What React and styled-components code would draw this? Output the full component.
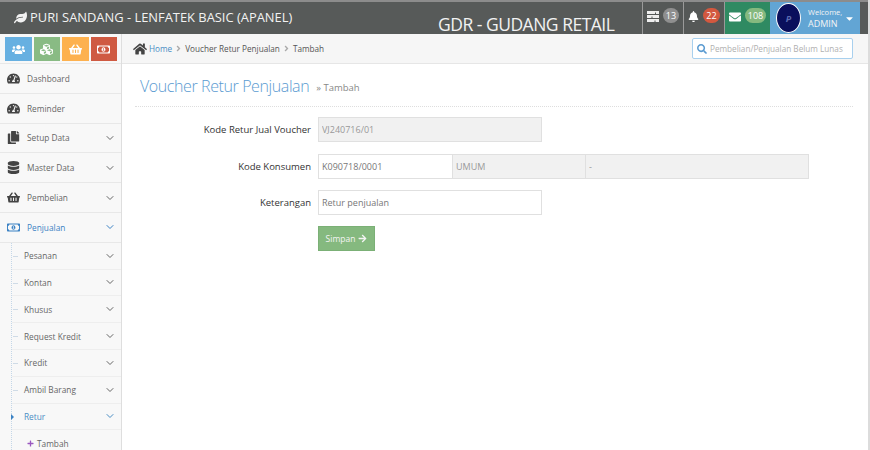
import styled, { createGlobalStyle } from "styled-components";
import {
  FaLeaf,
  FaHome,
  FaTachometerAlt,
  FaCopy,
  FaDatabase,
  FaShoppingBasket,
  FaRegMoneyBillAlt,
  FaBell,
  FaEnvelope,
  FaSearch,
  FaArrowRight,
  FaPlus,
  FaUsers,
  FaCubes,
  FaAngleRight,
  FaCaretDown,
} from "react-icons/fa";
import { FiChevronDown } from "react-icons/fi";

const GlobalStyle = createGlobalStyle`
  html, body {
    margin: 0;
    height: 100%;
    overflow: hidden;
    background: #fff;
  }
  body {
    font-family: "Open Sans", "Liberation Sans", sans-serif;
  }
  * {
    box-sizing: border-box;
  }
`;

const shortcuts = [
  { id: "users", icon: FaUsers, color: "#67b0e1" },
  { id: "cubes", icon: FaCubes, color: "#89bb84" },
  { id: "basket", icon: FaShoppingBasket, color: "#fdb14f" },
  { id: "money", icon: FaRegMoneyBillAlt, color: "#cf5a42" },
];

const mainMenu = [
  { name: "Dashboard", icon: FaTachometerAlt },
  { name: "Reminder", icon: FaTachometerAlt },
  { name: "Setup Data", icon: FaCopy, arrow: true },
  { name: "Master Data", icon: FaDatabase, arrow: true },
  { name: "Pembelian", icon: FaShoppingBasket, arrow: true },
  { name: "Penjualan", icon: FaRegMoneyBillAlt, arrow: true, active: true },
];

const subMenu = ["Pesanan", "Kontan", "Khusus", "Request Kredit", "Kredit", "Ambil Barang"];

const TasksIcon = () => (
  <svg width="12" height="11" viewBox="0 0 12 11" fill="#eee">
    <path d="M0 0h12v3H9V1.6H8V3H0z" />
    <path d="M0 4h12v3H5.5V5.6h-1V7H0z" />
    <path d="M0 8h12v3H8.5V9.6h-1V11H0z" />
  </svg>
);

const App = () => (
  <Page>
    <GlobalStyle />
    <Header>
      <Brand>
        <FaLeaf size={13} />
        PURI SANDANG - LENFATEK BASIC (APANEL)
      </Brand>
      <Store>GDR - GUDANG RETAIL</Store>
      <TopItem $width={41}>
        <TasksIcon />
        <Badge $color="#8f8f8f">13</Badge>
      </TopItem>
      <TopItem $width={41}>
        <FaBell size={11} color="#fff" />
        <Badge $color="#d3583f">22</Badge>
      </TopItem>
      <TopItem $width={46} $bg="#2f8a62">
        <FaEnvelope size={12} color="#fff" />
        <Badge $color="#85b97f">108</Badge>
      </TopItem>
      <UserItem>
        <Avatar>
          <AvatarMark>P</AvatarMark>
        </Avatar>
        <UserText>
          <small>Welcome,</small>
          <span>ADMIN</span>
        </UserText>
        <FaCaretDown size={11} color="#fff" />
      </UserItem>
    </Header>
    <Body>
      <Sidebar>
        <Shortcuts>
          {shortcuts.map(({ id, icon: Icon, color }) => (
            <Shortcut key={id} $color={color}>
              <Icon size={13} color="#fff" />
            </Shortcut>
          ))}
        </Shortcuts>
        {mainMenu.map(({ name, icon: Icon, arrow, active }) => (
          <MenuRow key={name} $active={active}>
            <MenuIcon $active={active}>
              <Icon size={13} />
            </MenuIcon>
            <MenuLabel>{name}</MenuLabel>
            {arrow && <FiChevronDown size={12} />}
          </MenuRow>
        ))}
        <SubList>
          {subMenu.map((name) => (
            <SubRow key={name}>
              <SubLabel>{name}</SubLabel>
              <FiChevronDown size={12} />
            </SubRow>
          ))}
          <SubRow $active>
            <SubLabel>Retur</SubLabel>
            <FiChevronDown size={12} />
          </SubRow>
          <LeafRow>
            <FaPlus size={7} color="#9b59c0" />
            Tambah
          </LeafRow>
        </SubList>
      </Sidebar>
      <Main>
        <Breadcrumb>
          <FaHome size={14} color="#444" />
          <CrumbLink>Home</CrumbLink>
          <FaAngleRight size={9} color="#aaa" />
          <span>Voucher Retur Penjualan</span>
          <FaAngleRight size={9} color="#aaa" />
          <span>Tambah</span>
          <SearchBox>
            <FaSearch size={10} color="#5b9bd1" />
            <SearchInput placeholder="Pembelian/Penjualan Belum Lunas" />
          </SearchBox>
        </Breadcrumb>
        <Content>
          <TitleRow>
            <Title>Voucher Retur Penjualan</Title>
            <Subtitle>» Tambah</Subtitle>
          </TitleRow>
          <Form>
            <FormRow>
              <Label>Kode Retur Jual Voucher</Label>
              <Field $width={224} $disabled readOnly value="VJ240716/01" />
            </FormRow>
            <FormRow>
              <Label>Kode Konsumen</Label>
              <Field $width={135} readOnly value="K090718/0001" />
              <Field $width={134} $disabled readOnly value="UMUM" />
              <Field $width={224} $disabled readOnly value="-" />
            </FormRow>
            <FormRow>
              <Label>Keterangan</Label>
              <Field $width={224} readOnly value="Retur penjualan" />
            </FormRow>
            <SaveButton type="button">
              Simpan <FaArrowRight size={9} />
            </SaveButton>
          </Form>
        </Content>
      </Main>
    </Body>
  </Page>
);

const Page = styled.div`
  width: 870px;
  height: 450px;
  overflow: hidden;
  display: flex;
  flex-direction: column;
  border-right: 2px solid #dcdcdc;
`;

const Header = styled.header`
  height: 34px;
  flex: none;
  display: flex;
  align-items: stretch;
  background: #575a59;
  border-top: 2px solid #8c8c8c;
  padding-right: 7px;
  color: #f2f2f2;
`;

const Brand = styled.div`
  display: flex;
  align-items: center;
  gap: 3px;
  padding: 0 0 2px 14px;
  font-size: 12.9px;
  white-space: nowrap;
  width: 438px;
`;

const Store = styled.div`
  width: 204px;
  font-size: 17.5px;
  line-height: 20px;
  letter-spacing: -0.5px;
  padding-top: 12px;
  white-space: nowrap;
`;

const TopItem = styled.div`
  width: ${({ $width }) => $width}px;
  display: flex;
  align-items: center;
  justify-content: center;
  gap: 4px;
  padding-bottom: 3px;
  background: ${({ $bg }) => $bg || "#555857"};
  border-left: 1px solid #9a9a9a;
`;

const Badge = styled.span`
  height: 15px;
  min-width: 15px;
  padding: 0 3px;
  border-radius: 8px;
  background: ${({ $color }) => $color};
  color: #fff;
  font-size: 9px;
  line-height: 15px;
  text-align: center;
  margin-bottom: 3px;
`;

const UserItem = styled.div`
  width: 90px;
  display: flex;
  align-items: center;
  padding-left: 6px;
  background: #62a5d4;
`;

const Avatar = styled.div`
  width: 25px;
  height: 30px;
  flex: none;
  margin-right: 7px;
  border-radius: 50%;
  border: 1px solid #fff;
  background: #0a0f5c;
  display: flex;
  align-items: center;
  justify-content: center;
`;

const AvatarMark = styled.span`
  color: #5a6ab0;
  font-size: 9px;
  font-weight: 700;
  font-style: italic;
`;

const UserText = styled.div`
  display: flex;
  flex-direction: column;
  flex: none;
  width: 36px;
  font-size: 9px;
  line-height: 11px;
  color: #f4f4f4;

  small {
    font-size: 7.5px;
  }
`;

const Body = styled.div`
  flex: 1;
  display: flex;
  min-height: 0;
`;

const Sidebar = styled.aside`
  width: 122px;
  flex: none;
  background: #f8f8f8;
  border-right: 1px solid #dedede;
`;

const Shortcuts = styled.div`
  height: 30px;
  display: flex;
  gap: 2px;
  padding: 3px 0 0 5px;
  border-bottom: 1px solid #e8e8e8;
`;

const Shortcut = styled.div`
  width: 26.5px;
  height: 24px;
  background: ${({ $color }) => $color};
  display: flex;
  align-items: center;
  justify-content: center;
`;

const MenuRow = styled.div`
  height: 29.8px;
  display: flex;
  align-items: center;
  padding: 0 5px 0 7px;
  border-bottom: 1px solid #e8e8e8;
  color: ${({ $active }) => ($active ? "#3b82c4" : "#666")};
`;

const MenuIcon = styled.span`
  width: 20px;
  display: flex;
  color: ${({ $active }) => ($active ? "#3b82c4" : "#444")};
`;

const MenuLabel = styled.span`
  flex: 1;
  font-size: 8.3px;
`;

const SubList = styled.div`
  border-left: 1px dotted #c4d7e8;
  margin-left: 11px;
`;

const SubRow = styled.div`
  position: relative;
  height: 26.8px;
  display: flex;
  align-items: center;
  padding: 0 5px 0 12px;
  border-bottom: 1px solid #eeeeee;
  color: ${({ $active }) => ($active ? "#4a8dc4" : "#666")};

  &::before {
    content: "";
    position: absolute;
    left: ${({ $active }) => ($active ? "-1px" : "1px")};
    top: ${({ $active }) => ($active ? "10px" : "13px")};
    width: ${({ $active }) => ($active ? "0" : "5px")};
    height: ${({ $active }) => ($active ? "0" : "1px")};
    background: ${({ $active }) => ($active ? "transparent" : "#cfdbe6")};
    border-left: ${({ $active }) => ($active ? "3px solid #3b82c4" : "0")};
    border-top: ${({ $active }) => ($active ? "3px solid transparent" : "0")};
    border-bottom: ${({ $active }) => ($active ? "3px solid transparent" : "0")};
  }
`;

const SubLabel = styled.span`
  flex: 1;
  font-size: 8.3px;
`;

const LeafRow = styled.div`
  height: 26px;
  display: flex;
  align-items: center;
  gap: 3px;
  padding-left: 15px;
  font-size: 8.3px;
  color: #666;
`;

const Main = styled.main`
  flex: 1;
  min-width: 0;
  background: #fff;
`;

const Breadcrumb = styled.nav`
  height: 30px;
  display: flex;
  align-items: center;
  gap: 2px;
  padding: 0 15px 0 11px;
  background: #f6f6f6;
  border-bottom: 1px solid #e6e6e6;
  font-size: 8.2px;
  color: #555;
`;

const CrumbLink = styled.span`
  color: #4a8dc4;
`;

const SearchBox = styled.div`
  margin-left: auto;
  width: 161px;
  height: 21px;
  display: flex;
  align-items: center;
  gap: 3px;
  padding-left: 4px;
  background: #fff;
  border: 1px solid #a8d0ee;
  border-radius: 2px;
`;

const SearchInput = styled.input`
  flex: 1;
  min-width: 0;
  border: 0;
  outline: 0;
  padding: 0;
  background: transparent;
  font-family: inherit;
  font-size: 8.2px;

  &::placeholder {
    color: #b0b0b0;
    opacity: 1;
  }
`;

const Content = styled.div`
  padding: 0 15px 0 13px;
`;

const TitleRow = styled.div`
  height: 43px;
  display: flex;
  align-items: center;
  gap: 7px;
  padding-left: 5px;
  padding-top: 2px;
  border-bottom: 1px dotted #dedede;
`;

const Title = styled.h1`
  margin: 0;
  font-size: 16px;
  font-weight: 300;
  letter-spacing: -0.4px;
  color: #5b9bd1;
`;

const Subtitle = styled.span`
  font-size: 9.5px;
  color: #888;
  padding-top: 3px;
`;

const Form = styled.form`
  display: flex;
  flex-direction: column;
  gap: 11.5px;
  padding-top: 10px;
`;

const FormRow = styled.div`
  display: flex;
  align-items: center;
`;

const Label = styled.label`
  width: 176px;
  margin-right: 7px;
  text-align: right;
  font-size: 9.5px;
  color: #333;
`;

const Field = styled.input`
  width: ${({ $width }) => $width}px;
  height: 25px;
  padding: 0 3px;
  border: 1px solid #e0e0e0;
  outline: 0;
  background: ${({ $disabled }) => ($disabled ? "#f1f1f1" : "#fff")};
  font-family: inherit;
  font-size: 9px;
  color: ${({ $disabled }) => ($disabled ? "#999" : "#777")};
  margin-right: -1px;
`;

const SaveButton = styled.button`
  margin: -1px 0 0 183px;
  width: 57px;
  height: 25px;
  display: flex;
  align-items: center;
  justify-content: center;
  gap: 3px;
  border: 1px solid #7bb076;
  background: #85b97f;
  color: #f4f4f4;
  font-family: inherit;
  font-size: 8.5px;
`;

export default App;
